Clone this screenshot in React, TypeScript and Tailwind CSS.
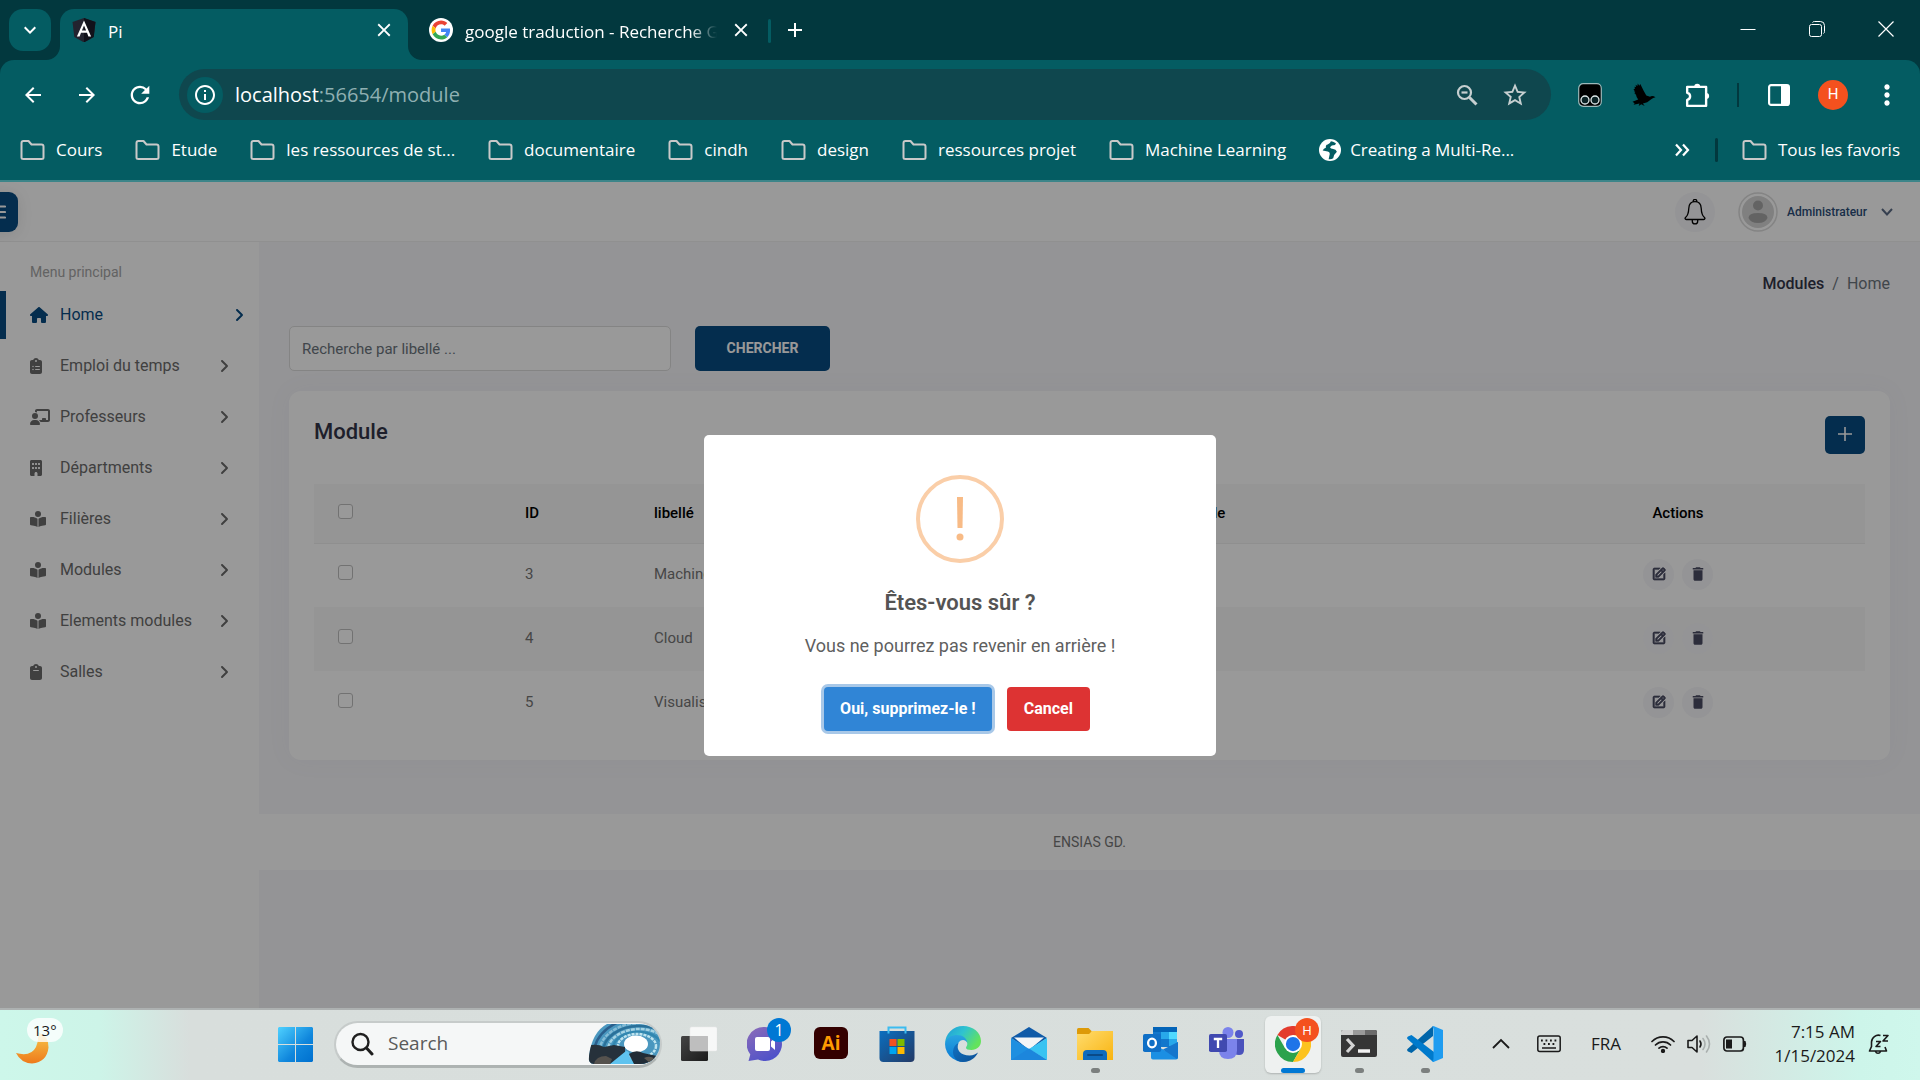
import type { ReactNode } from "react";
import {
  MdArrowBack,
  MdArrowForward,
  MdRefresh,
  MdClose,
  MdAdd,
  MdInfoOutline,
  MdStarOutline,
  MdMoreVert,
  MdKeyboardArrowDown,
  MdDelete,
} from "react-icons/md";
import {
  FaHouse,
  FaClipboardList,
  FaChalkboardUser,
  FaBuilding,
  FaBookOpenReader,
  FaClipboard,
  FaAngleRight,
} from "react-icons/fa6";
import { BiEdit } from "react-icons/bi";

const ui = "font-['Open_Sans','Noto_Sans',sans-serif]";

/* ---------- Browser chrome ---------- */

function AngularLogo() {
  return (
    <svg viewBox="0 0 24 24" className="size-6 shrink-0" aria-hidden="true">
      <path d="M12 0 23.5 4 21.7 19 12 24.4 2.3 19 .5 4Z" fill="#23232f" />
      <path d="M12 0 23.5 4 21.7 19 12 24.4Z" fill="#11111a" />
      <path d="M12 2.6 4.9 18.4h2.7L9 14.8h6l1.400 3.600h2.700ZM12 7.600l2.100 5H9.900Z" fill="#fff" />
    </svg>
  );
}

function GoogleLogo() {
  return (
    <svg viewBox="0 0 24 24" className="size-6 shrink-0" aria-hidden="true">
      <circle cx="12" cy="12" r="12" fill="#fff" />
      <g transform="translate(2.600 2.600) scale(.393)">
        <path fill="#EA4335" d="M24 9.500c3.540 0 6.710 1.220 9.210 3.600l6.850-6.850C35.900 2.380 30.470 0 24 0 14.620 0 6.510 5.380 2.560 13.220l7.980 6.190C12.430 13.720 17.740 9.500 24 9.500z" />
        <path fill="#4285F4" d="M46.980 24.550c0-1.570-.15-3.090-.38-4.550H24v9.020h12.940c-.58 2.960-2.260 5.480-4.780 7.180l7.730 6c4.510-4.180 7.090-10.360 7.090-17.650z" />
        <path fill="#FBBC05" d="M10.530 28.590c-.48-1.450-.76-2.990-.76-4.590s.27-3.140.76-4.590l-7.980-6.190C.92 16.460 0 20.120 0 24c0 3.880.92 7.540 2.560 10.780l7.970-6.190z" />
        <path fill="#34A853" d="M24 48c6.480 0 11.930-2.130 15.890-5.810l-7.730-6c-2.150 1.450-4.920 2.300-8.160 2.300-6.260 0-11.570-4.220-13.470-9.910l-7.980 6.190C6.510 42.620 14.620 48 24 48z" />
      </g>
    </svg>
  );
}

function TabStrip() {
  return (
    <div className="flex h-[60px] bg-[#02383e] pl-[9px] text-white">
      <button aria-label="Rechercher dans les onglets" className="mt-[9px] grid size-[42px] place-items-center rounded-[14px] bg-[#045c62]">
        <MdKeyboardArrowDown className="size-6" />
      </button>
      <div className="relative ml-[9px] mt-[9px] flex w-[348px] items-center rounded-t-[14px] bg-[#045c62] pb-[9px] pl-3 pr-[13px]">
        <svg viewBox="0 0 14 14" className="absolute bottom-0 right-full size-[14px]" aria-hidden="true">
          <path d="M14 0v14H0A14 14 0 0 0 14 0Z" fill="#045c62" />
        </svg>
        <svg viewBox="0 0 14 14" className="absolute bottom-0 left-full size-[14px]" aria-hidden="true">
          <path d="M0 0v14h14A14 14 0 0 1 0 0Z" fill="#045c62" />
        </svg>
        <AngularLogo />
        <span className="ml-3 flex-1 pt-[3px] text-[17px]">Pi</span>
        <button aria-label="Fermer l'onglet Pi">
          <MdClose className="size-[22px]" />
        </button>
      </div>
      <div className="ml-[21px] flex w-[324px] items-center">
        <GoogleLogo />
        <span className="ml-3 w-[252px] whitespace-nowrap pt-[3px] text-[17px] [mask-image:linear-gradient(to_right,black_225px,transparent_252px)]">
          google traduction - Recherche G
        </span>
        <button aria-label="Fermer l'onglet google traduction" className="ml-[13px]">
          <MdClose className="size-[22px]" />
        </button>
      </div>
      <div className="ml-[15px] mt-[19px] h-6 w-[3px] rounded bg-[#045c62]" />
      <button aria-label="Nouvel onglet" className="ml-[12px] self-center">
        <MdAdd className="size-6" />
      </button>
      <div className="ml-auto flex items-center pb-[2px]">
        <button aria-label="Réduire" className="grid w-[69px] place-items-center">
          <svg viewBox="0 0 18 18" className="size-[18px]" fill="none" stroke="currentColor">
            <path d="M1.500 9.500h15" />
          </svg>
        </button>
        <button aria-label="Restaurer" className="grid w-[69px] place-items-center">
          <svg viewBox="0 0 18 18" className="size-[18px]" fill="none" stroke="currentColor">
            <rect x="1.500" y="4.500" width="12" height="12" rx="2" />
            <path d="M4.500 2.500q.500-1 2-1h6q4 0 4 4v6q0 1.500-1 2" />
          </svg>
        </button>
        <button aria-label="Fermer" className="grid w-[69px] place-items-center">
          <svg viewBox="0 0 18 18" className="size-[18px]" fill="none" stroke="currentColor" strokeWidth="1.200">
            <path d="m1.500 1.500 15 15m0-15-15 15" />
          </svg>
        </button>
      </div>
    </div>
  );
}

function AddressBar() {
  return (
    <div className="flex h-[69px] items-center pl-[21px] text-white">
      <button aria-label="Précédent">
        <MdArrowBack className="size-6" />
      </button>
      <button aria-label="Suivant" className="ml-[30px]">
        <MdArrowForward className="size-6" />
      </button>
      <button aria-label="Actualiser" className="ml-[27px]">
        <MdRefresh className="size-7" />
      </button>
      <div className="ml-[25px] flex h-[51px] flex-1 items-center rounded-full bg-[#0f474e] pl-2 pr-[22px]">
        <button aria-label="Informations du site" className="grid size-9 place-items-center rounded-full bg-[#045c62]">
          <MdInfoOutline className="size-6" />
        </button>
        <p className="ml-3 flex-1 text-[20px] leading-6">
          localhost<span className="text-[#8fb0b2]">:56654/module</span>
        </p>
        <button aria-label="Zoom" className="mr-[22px] text-[#c6cfd0]">
          <svg viewBox="0 0 24 24" className="size-6" fill="none" stroke="currentColor" strokeWidth="2.200">
            <circle cx="9.500" cy="9.500" r="6.500" />
            <path d="m14.500 14.500 7 7" strokeWidth="3" />
            <path d="M6.500 9.500h6" />
          </svg>
        </button>
        <button aria-label="Ajouter aux favoris" className="text-[#c6cfd0]">
          <MdStarOutline className="size-7" />
        </button>
      </div>
      <div className="flex items-center pl-[27px]">
        <button aria-label="Extension de traduction">
          <svg viewBox="0 0 24 24" className="size-6">
            <rect x=".7" y=".7" width="22.600" height="22.600" rx="4.500" fill="#000" stroke="#9db9ba" strokeWidth="1.200" />
            <circle cx="7" cy="17" r="4" fill="#0b2225" stroke="#dfe9ea" strokeWidth="1.300" />
            <circle cx="17" cy="17" r="4" fill="#0b2225" stroke="#dfe9ea" strokeWidth="1.300" />
          </svg>
        </button>
        <button aria-label="Extension oiseau" className="ml-[30px]">
          <svg viewBox="0 0 24 24" className="size-6">
            <path
              d="M1.500 6.500 3 5.500 2.400 3.800l1.700.300L3.600 1.800l1.800 1.300L5.800.600l1.500 2.200L8.300 1l3.200 6.500 2.800 5 3.700 1.200q2.300-1.700 5.500.500l-2.300.700-2 1.300-4 3-4.300 1.400 1.800 2.300-3.400-1.600-2.600 1.700.800-2.400-5.900 1.200 1-1.500L.500 18.800l5.700-2.300Q4.200 14 4 11.800L2.200 10l1.300.300L1.800 8.300l1.500.500Z"
              fill="#000"
            />
          </svg>
        </button>
        <button aria-label="Extensions" className="ml-[29px]">
          <svg viewBox="0 0 24 24" className="size-[26px]" fill="none" stroke="currentColor" strokeWidth="2.200" strokeLinejoin="round">
            <path d="M2 4.500h17.500V22H2v-5.500a3.300 3.300 0 0 0 0-6.500Z" />
            <path d="M8.500 4.500a2.800 2.800 0 0 1 5.600 0ZM19.500 10.200a2.800 2.800 0 0 1 0 5.600Z" fill="currentColor" stroke="none" />
          </svg>
        </button>
        <div className="ml-[26px] h-6 w-[2px] bg-[#02383e]" />
        <button aria-label="Panneau latéral" className="ml-[28px]">
          <svg viewBox="0 0 24 24" className="size-6">
            <rect x="2.100" y="2.100" width="19.800" height="19.800" rx="2" fill="none" stroke="#fff" strokeWidth="2.200" />
            <path d="M14 2h8v20h-8Z" fill="#fff" />
          </svg>
        </button>
        <button aria-label="Profil" className="ml-[27px] grid size-[30px] place-items-center rounded-full bg-[#f4511e] font-['Roboto',sans-serif] text-[15px]">
          H
        </button>
        <button aria-label="Menu du navigateur" className="ml-[23px] mr-[17px]">
          <MdMoreVert className="size-[32px]" />
        </button>
      </div>
    </div>
  );
}

const bookmarks = ["Cours", "Etude", "les ressources de st...", "documentaire", "cindh", "design", "ressources projet", "Machine Learning"];

function Folder() {
  return (
    <svg viewBox="0 0 25 22" className="h-[22px] w-[25px] shrink-0" fill="none" stroke="#c9c9c9" strokeWidth="2" strokeLinejoin="round" aria-hidden="true">
      <path d="M1.500 18.500V4q0-2 2-2h5l3 3.500h10q2 0 2 2v11q0 1.500-2 1.500h-18q-2 0-2-1.500Z" />
    </svg>
  );
}

function BookmarksBar() {
  return (
    <nav aria-label="Favoris" className="flex h-[51px] items-center gap-[33px] whitespace-nowrap pb-[9px] pl-5 pr-5 text-[17px] text-white">
      {bookmarks.map((b) => (
        <a key={b} href="#" className="flex items-center gap-[11px]">
          <Folder />
          {b}
        </a>
      ))}
      <a href="#" className="flex items-center gap-[9px]">
        <svg viewBox="0 0 24 24" className="size-[22px]" aria-hidden="true">
          <circle cx="12" cy="12" r="12" fill="#fff" />
          <path d="M13 2.500q-1 3-3.500 3.500t-2 3.500Q5 10 4 12.500l5.500 1q3 1 2 4l-1 4.500q3 .500 5-1l1-3.500 3-3.500q-1-3-4-3t-3.500-2l2-2 3.500-.500 1-2Q15 2.500 13 2.500Z" fill="#045c62" />
        </svg>
        Creating a Multi-Re...
      </a>
      <button aria-label="Autres favoris" className="ml-auto">
        <svg viewBox="0 0 16 14" className="h-[14px] w-4" fill="none" stroke="currentColor" strokeWidth="2.200">
          <path d="m2 1.500 5 5.500-5 5.500m7-11 5 5.500-5 5.500" />
        </svg>
      </button>
      <div className="-ml-2 -mr-[9px] h-6 w-[3px] rounded bg-[#02383e]" />
      <a href="#" className="flex items-center gap-[11px]">
        <Folder />
        Tous les favoris
      </a>
    </nav>
  );
}

/* ---------- Application page ---------- */

type MenuItem = { label: string; icon: ReactNode; active?: boolean };

const menu: MenuItem[] = [
  { label: "Home", icon: <FaHouse className="size-[18px]" />, active: true },
  { label: "Emploi du temps", icon: <FaClipboardList className="-ml-0.5 size-4" /> },
  { label: "Professeurs", icon: <FaChalkboardUser className="h-4 w-5" /> },
  { label: "Départments", icon: <FaBuilding className="-ml-0.5 size-4" /> },
  { label: "Filières", icon: <FaBookOpenReader className="size-4" /> },
  { label: "Modules", icon: <FaBookOpenReader className="size-4" /> },
  { label: "Elements modules", icon: <FaBookOpenReader className="size-4" /> },
  { label: "Salles", icon: <FaClipboard className="-ml-0.5 size-4" /> },
];

function Sidebar() {
  return (
    <aside className="w-[259px] shrink-0 bg-white pt-[19px]">
      <h2 className="pl-[30px] text-[14px] leading-[22px] text-[#a5a5a5]">Menu principal</h2>
      <ul className="mt-2 flex flex-col gap-[3px]">
        {menu.map((m) => (
          <li key={m.label}>
            <a
              href="#"
              className={
                m.active
                  ? "flex h-12 items-center rounded-l-none border-l-[6px] border-[#084b82] pl-6 pr-3 text-[#084b82]"
                  : "flex h-12 items-center pl-[30px] pr-[27px] text-[#6b6b6b]"
              }
            >
              <span className="w-[30px]">{m.icon}</span>
              <span className="flex-1 text-[16px]">{m.label}</span>
              <FaAngleRight className="size-4" />
            </a>
          </li>
        ))}
      </ul>
    </aside>
  );
}

function PageHeader() {
  return (
    <header className="flex h-[60px] items-center border-b border-[#f0f0f0] bg-white pr-[27px] pt-px">
      <button aria-label="Basculer le menu" className="-ml-[22px] grid size-10 place-items-center rounded-[9px] bg-[#084b82] text-white shadow-[0_2px_16px_rgba(0,0,0,0.1)]">
        <svg viewBox="0 0 16 14" className="h-[14px] w-4" stroke="currentColor" strokeWidth="2.200" strokeLinecap="round">
          <path d="M1 1.500h14M1 7h14M1 12.500h14" />
        </svg>
      </button>
      <button aria-label="Notifications" className="ml-auto grid size-10 place-items-center rounded-full bg-[#f7f7fa] text-black">
        <svg viewBox="0 0 22 26" className="h-[26px] w-[22px]" fill="none" stroke="currentColor" strokeWidth="1.300" strokeLinejoin="round">
          <path d="M9.300 2.800a1.800 1.800 0 1 1 3.400 0M11 2.700c-4 0-6 2.600-6.200 6.500-.2 4.500-.8 7.300-3.300 9.300-1 1 0 2 1 2h17c1 0 2-1 1-2-2.500-2-3.100-4.800-3.300-9.300C17 5.300 15 2.700 11 2.700ZM8.300 20.800v1.400a2.700 2.700 0 0 0 5.400 0v-1.400" />
        </svg>
      </button>
      <button className="ml-[23px] flex items-center">
        <svg viewBox="0 0 40 40" className="size-10" aria-hidden="true">
          <circle cx="20" cy="20" r="19" fill="#fff" stroke="#dcdcdc" strokeWidth="1.500" />
          <circle cx="20" cy="20" r="16" fill="#d6d6d6" />
          <circle cx="20" cy="13.500" r="5" fill="#a6a6a6" />
          <path d="M10.500 26q0-5 9.500-5t9.500 5q-2 5-9.500 5t-9.500-5Z" fill="#a6a6a6" />
        </svg>
        <span className="ml-[9px] text-[12px] font-medium text-[#2b4d78]">Administrateur</span>
        <svg viewBox="0 0 12 8" className="ml-[14px] h-2 w-3 text-[#5b6b85]" fill="none" stroke="currentColor" strokeWidth="2">
          <path d="m1 1 5 5.500L11 1" />
        </svg>
      </button>
    </header>
  );
}

const rows = [
  { id: 3, label: "Machine Learning" },
  { id: 4, label: "Cloud" },
  { id: 5, label: "Visualisation" },
];

const box = "block size-[15px] appearance-none rounded-[3px] border border-[#bfbfbf] bg-white";

function ModuleCard() {
  return (
    <section className="mt-5 rounded-[12px] bg-white px-[25px] py-[25px] shadow-[0_0_24px_rgba(120,120,170,0.06)]">
      <div className="flex items-start justify-between">
        <h1 className="text-[22px] font-medium leading-8 text-[#333548]">Module</h1>
        <button aria-label="Ajouter un module" className="grid h-[38px] w-10 place-items-center rounded-[5px] bg-[#084b82] text-white">
          <svg viewBox="0 0 14 14" className="mb-[2px] size-[14px]" stroke="currentColor" strokeWidth="1.600">
            <path d="M7 0v14M0 7h14" />
          </svg>
        </button>
      </div>
      <table className="mt-[30px] w-full table-fixed text-left text-[15px] text-[#757575]">
        <thead>
          <tr className="h-[59px] border-b border-[#eeeeee] bg-[#f8f8f8] font-medium text-black">
            <th className="w-[187px] pb-1 pl-6">
              <input type="checkbox" aria-label="Tout sélectionner" className={box} />
            </th>
            <th className="w-[129px] pl-6 font-medium">ID</th>
            <th className="w-1/3 pl-6 font-medium">libellé</th>
            <th className="pl-7 font-medium">Module</th>
            <th className="w-[236px] font-medium">
              <div className="w-[98px] text-center">Actions</div>
            </th>
          </tr>
        </thead>
        <tbody>
          {rows.map((r) => (
            <tr key={r.id} className="h-16 even:bg-[#f8f8f8]">
              <td className="pb-[6px] pl-6">
                <input type="checkbox" aria-label={r.label} className={box} />
              </td>
              <td className="pb-[2px] pl-6">{r.id}</td>
              <td className="pb-[2px] pl-6">{r.label}</td>
              <td />
              <td className="pb-[2px]">
                <div className="flex w-[98px] justify-center gap-2 text-[#4a4c63]">
                  <button aria-label={"Modifier " + r.label} className="grid size-[31px] place-items-center rounded-full bg-[#f7f7fa]">
                    <BiEdit className="size-4" stroke="currentColor" strokeWidth={1} />
                  </button>
                  <button aria-label={"Supprimer " + r.label} className="grid size-[31px] place-items-center rounded-full bg-[#f7f7fa]">
                    <MdDelete className="size-[18px]" />
                  </button>
                </div>
              </td>
            </tr>
          ))}
        </tbody>
      </table>
    </section>
  );
}

function ConfirmDialog() {
  return (
    <div className="absolute inset-0 grid place-items-center bg-black/40">
      <div role="alertdialog" aria-labelledby="dlg-title" aria-describedby="dlg-text" className="flex w-[512px] flex-col items-center rounded-[5px] bg-white pb-[25px] pt-10">
        <svg viewBox="0 0 88 88" className="size-[88px]" aria-hidden="true">
          <circle cx="44" cy="44" r="42" fill="none" stroke="#facea8" strokeWidth="4" />
          <path d="M41 22h6l-.500 31h-5Z" fill="#f8bb86" />
          <circle cx="44" cy="62" r="3.500" fill="#f8bb86" />
        </svg>
        <h2 id="dlg-title" className="mt-[25px] text-[22px] font-semibold leading-[30px] text-[#545454]">
          Êtes-vous sûr ?
        </h2>
        <p id="dlg-text" className="mt-[15px] text-[18px] leading-[26px] text-[#5f5f5f]">
          Vous ne pourrez pas revenir en arrière !
        </p>
        <div className="mt-[28px] flex gap-[15px] pr-[6px] text-[16px] font-bold text-white">
          <button className="h-11 rounded-[4px] bg-[#3085d6] px-4 shadow-[0_0_0_3px_#a8c8e8]">Oui, supprimez-le !</button>
          <button className="h-11 rounded-[4px] bg-[#dd3333] px-[17px]">Cancel</button>
        </div>
      </div>
    </div>
  );
}

function ModulePage() {
  return (
    <main className="relative flex flex-1 flex-col overflow-hidden bg-[#f7f7fa] font-['Roboto',sans-serif]">
      <PageHeader />
      <div className="flex flex-1">
        <Sidebar />
        <div className="flex-1">
          <div className="px-[30px]">
            <nav aria-label="Fil d'Ariane" className="flex justify-end gap-2 pt-[30px] text-[16px] leading-6">
              <a href="#" className="font-medium text-[#333548]">
                Modules
              </a>
              <span className="text-[#6c757d]">/</span>
              <span className="text-[#6c757d]">Home</span>
            </nav>
            <form className="mt-[30px] flex gap-6">
              <input
                type="text"
                aria-label="Recherche par libellé"
                placeholder="Recherche par libellé ..."
                className="h-[45px] w-[382px] rounded-[5px] border border-[#dddddd] bg-white px-3 text-[15px] placeholder:text-[#6c757d]"
              />
              <button type="button" className="h-[45px] w-[135px] rounded-[5px] bg-[#084b82] text-[14px] font-bold text-white">
                CHERCHER
              </button>
            </form>
            <ModuleCard />
          </div>
          <footer className="mt-[54px] bg-white py-[17px] text-center text-[14px] leading-[22px] text-[#757575]">ENSIAS GD.</footer>
        </div>
      </div>
      <ConfirmDialog />
    </main>
  );
}

/* ---------- Taskbar ---------- */

const TaskViewIcon = () => (
  <svg viewBox="0 0 36 36" className="size-9">
    <defs>
      <linearGradient id="tv1" x1="0" y1="0" x2="1" y2="1">
        <stop stopColor="#444" />
        <stop offset="1" stopColor="#1b1b1b" />
      </linearGradient>
    </defs>
    <rect x="0" y="10" width="27" height="25" rx="1.500" fill="url(#tv1)" />
    <rect x="9" y="1" width="27" height="24" rx="1.500" fill="#fff" fillOpacity=".78" stroke="#e8e8e8" strokeWidth=".5" />
    <path d="M9 10h18v15H9z" fill="#b9b9b9" fillOpacity=".8" />
  </svg>
);

const ChatIcon = () => (
  <span className="relative">
    <svg viewBox="0 0 36 36" className="size-9">
      <defs>
        <linearGradient id="ch" x1="0" y1="0" x2="0.600" y2="1">
          <stop stopColor="#8d6cb8" />
          <stop offset="1" stopColor="#4f52c9" />
        </linearGradient>
      </defs>
      <path d="M18 1a17 17 0 1 1-7 32.500L1.500 35l1.800-6.500A17 17 0 0 1 18 1Z" fill="url(#ch)" />
      <rect x="8" y="11" width="15" height="14" rx="2" fill="#fff" />
      <path d="m24 15.500 4-3.500v12l-4-3.500Z" fill="#fff" />
    </svg>
    <span className="absolute -right-2 -top-2 grid size-6 place-items-center rounded-full bg-[#0078d4] text-[16px] leading-none text-white">1</span>
  </span>
);

const IllustratorIcon = () => (
  <span className="mb-0.5 grid h-8 w-[34px] place-items-center rounded-[6px] bg-[#330000] text-[19px] font-bold leading-none text-[#ff9a00]">Ai</span>
);

const StoreIcon = () => (
  <svg viewBox="0 0 36 36" className="size-9">
    <defs>
      <linearGradient id="st" x1="0" y1="0" x2="1" y2="1">
        <stop stopColor="#0a6fc0" />
        <stop offset="1" stopColor="#243a66" />
      </linearGradient>
    </defs>
    <path d="M.500 5h35v27q0 4-4 4h-27q-4 0-4-4Z" fill="url(#st)" />
    <path d="M9.500 7.500v-6h17v6" fill="none" stroke="#3cbcf0" strokeWidth="2" />
    <path d="M10.500 13h7v7h-7z" fill="#f25022" />
    <path d="M18.500 13h7v7h-7z" fill="#7fba00" />
    <path d="M10.500 21h7v7h-7z" fill="#00a4ef" />
    <path d="M18.500 21h7v7h-7z" fill="#ffb900" />
  </svg>
);

const EdgeIcon = () => (
  <svg viewBox="0 0 36 36" className="size-9">
    <defs>
      <linearGradient id="e1" x1="0" y1="0" x2="1" y2="1">
        <stop stopColor="#1173c4" />
        <stop offset="1" stopColor="#0c4f94" />
      </linearGradient>
      <linearGradient id="e2" x1="0" y1="0" x2="0" y2="1">
        <stop stopColor="#2aa5e0" />
        <stop offset="1" stopColor="#0878d4" />
      </linearGradient>
      <linearGradient id="e3" x1="0" y1="0" x2="1" y2=".5">
        <stop stopColor="#1f9ad8" />
        <stop offset=".5" stopColor="#2fc3d0" />
        <stop offset="1" stopColor="#63e35c" />
      </linearGradient>
    </defs>
    <path d="M0 18A18 18 0 0 1 18 0c10 0 18 6.500 18 15 0 5.500-4.300 9-9.500 9-3.500 0-5.500-1-5.500-2.300 0-1 1.300-1.500 1.300-3.700 0-3-3-7-9-7C6 11 1 14.500 0 18Z" fill="url(#e3)" />
    <path d="M0 18c.500-5 5.500-9 11.500-9 6.500 0 10.500 3.500 10.800 8-1-2.200-2.500-3-4.300-3-3 0-6 3-6 8.500 0 6.500 5 12.500 12 12.300A18 18 0 0 1 0 18Z" fill="url(#e2)" />
    <path d="M13.500 17c-3 7 2.500 12.500 11 12.500 4 0 6.500-1.500 8.500-3-2.500 5.500-8 9.500-15 9.500C10 36 7.500 28.500 8 25c.500-4 2.500-6.800 5.500-8Z" fill="url(#e1)" />
  </svg>
);

const MailIcon = () => (
  <svg viewBox="0 0 36 36" className="size-9">
    <path d="M0 12 18 1l18 11-18 12Z" fill="#0f5aa8" />
    <path d="M3 11.500h30L18 24Z" fill="#f3f5f7" />
    <path d="M0 12v22h36Z" fill="#1e8fe0" />
    <path d="M36 12v22L18 23Z" fill="#38c3f2" />
    <path d="M0 34h36L18 22.500Z" fill="#1c86dc" />
  </svg>
);

const ExplorerIcon = () => (
  <svg viewBox="0 0 36 36" className="size-9">
    <defs>
      <linearGradient id="fx" x1="0" y1="0" x2="1" y2="1">
        <stop stopColor="#ffdc6e" />
        <stop offset="1" stopColor="#f9b411" />
      </linearGradient>
    </defs>
    <path d="M0 3.500Q0 2 1.500 2h10L15 5.500V8H0Z" fill="#dd9a08" />
    <path d="M0 8h12l3-3h21v29H0Z" fill="url(#fx)" />
    <path d="M6 34v-6q0-4 4-4h16q4 0 4 4v6Z" fill="#0f6cbd" />
    <path d="M11 29h14" stroke="#0a4a87" strokeWidth="2" strokeLinecap="round" />
  </svg>
);

const OutlookIcon = () => (
  <svg viewBox="0 0 36 36" className="size-9">
    <path d="M10 3q0-2 2-2h20q2 0 2 2v18H10Z" fill="#1277cc" />
    <path d="M18 6h8v7h-8z" fill="#28a8ea" />
    <path d="M26 6h8v7h-8z" fill="#50d9ff" />
    <path d="M26 13h8v7h-8z" fill="#28a8ea" />
    <path d="M10 1h24v5H10z" fill="#0364b8" />
    <path d="M8 17l14 7.500L35 16v15.500q0 2-2 2H10q-2 0-2-2Z" fill="#1b8fe3" />
    <path d="M35 16v15q0 1-1 2L20 23.500Z" fill="#1676cc" />
    <rect x="0" y="8" width="18" height="18" rx="1.800" fill="#0f6fc6" />
    <ellipse cx="9" cy="17" rx="3.900" ry="4.400" fill="none" stroke="#fff" strokeWidth="2.300" />
  </svg>
);

const TeamsIcon = () => (
  <svg viewBox="0 0 36 36" className="size-9">
    <circle cx="30" cy="8" r="4" fill="#5059c9" />
    <path d="M23 13h12v11q0 5-5 5t-7-5Z" fill="#4b53bc" />
    <circle cx="19" cy="6.500" r="5.500" fill="#7b83eb" />
    <path d="M10 13h18v11.500q0 8.500-9 8.500t-9-8.500Z" fill="#7b83eb" />
    <rect x="0" y="8" width="18" height="18" rx="1.800" fill="#4049b0" />
    <path d="M4.800 13h8.400M9 13v9" stroke="#fff" strokeWidth="2.300" />
  </svg>
);

const ChromeIcon = () => (
  <span className="relative">
    <svg viewBox="0 0 48 48" className="size-9">
      <path d="M24 24 3.200 12A24 24 0 0 1 44.800 12H24Z" fill="#e33b2e" />
      <path d="M24 24 13.600 30 3.200 12A24 24 0 0 0 24 48l10.400-18Z" fill="#2ba24c" />
      <path d="M24 12h20.800A24 24 0 0 1 24 48l10.400-18Z" fill="#fcc31e" />
      <circle cx="24" cy="24" r="12" fill="#fff" />
      <circle cx="24" cy="24" r="9.500" fill="#1f74e8" />
    </svg>
    <span className="absolute -right-2 -top-2 grid size-6 place-items-center rounded-full bg-[#f4511e] text-[13px] leading-none text-white">H</span>
  </span>
);

const TerminalIcon = () => (
  <svg viewBox="0 0 36 36" className="size-9">
    <rect x="0" y="4" width="36" height="27" rx="2" fill="#363636" />
    <path d="M0 9V6q0-2 2-2h10v5Z" fill="#cfcfcf" />
    <path d="M12 4h12v5H12z" fill="#9a9a9a" />
    <path d="M24 4h10q2 0 2 2v3H24Z" fill="#6b6b6b" />
    <path d="m6 13 6 6.500-6 6.500" fill="none" stroke="#d5d5d5" strokeWidth="3.200" />
    <path d="M17 25h12" stroke="#f2f2f2" strokeWidth="3.500" />
  </svg>
);

const VsCodeIcon = () => (
  <svg viewBox="0 0 36 36" className="size-9">
    <path d="M26 0v10L4.500 27 1 25.500q-1.500-1-.5-2.500L25 1Z" fill="#0065a9" />
    <path d="M1 10.500 4.500 9 27 26v10l-2-1L.500 13q-1-1.500.500-2.500Z" fill="#007acc" />
    <path d="M26.500 0 36 4v28l-9.500 4q-1 0-1.500-1 1.500 0 1.500-2.500v-29Q26.500 1 25 1Z" fill="#1f9cf0" />
  </svg>
);

type TaskbarApp = { name: string; icon: ReactNode; state?: "open" | "active" };

const apps: TaskbarApp[] = [
  { name: "Vue des tâches", icon: <TaskViewIcon /> },
  { name: "Conversation", icon: <ChatIcon /> },
  { name: "Illustrator", icon: <IllustratorIcon /> },
  { name: "Microsoft Store", icon: <StoreIcon /> },
  { name: "Edge", icon: <EdgeIcon /> },
  { name: "Courrier", icon: <MailIcon /> },
  { name: "Explorateur de fichiers", icon: <ExplorerIcon />, state: "open" },
  { name: "Outlook", icon: <OutlookIcon /> },
  { name: "Teams", icon: <TeamsIcon /> },
  { name: "Chrome", icon: <ChromeIcon />, state: "active" },
  { name: "Terminal", icon: <TerminalIcon />, state: "open" },
  { name: "Visual Studio Code", icon: <VsCodeIcon />, state: "open" },
];

function SearchArt() {
  return (
    <svg viewBox="0 0 72 40" className="h-10 w-[72px]" aria-hidden="true">
      <defs>
        <clipPath id="artclip">
          <path d="M19 0h33a20 20 0 0 1 0 40H6q-6 0-5-8Q4 8 19 0Z" />
        </clipPath>
      </defs>
      <g clipPath="url(#artclip)">
        <path d="M0 0h72v40H0z" fill="#4a97bf" />
        <g fill="none" strokeWidth="2.500">
          <ellipse cx="52" cy="30" rx="46" ry="36" stroke="#2b5f8c" />
          <ellipse cx="52" cy="29" rx="41" ry="30" stroke="#86bcd6" strokeDasharray="4 1" />
          <ellipse cx="51" cy="28" rx="36" ry="26" stroke="#2a7099" />
          <ellipse cx="51" cy="26" rx="31" ry="21" stroke="#a5d3e3" strokeDasharray="4 1" />
          <ellipse cx="50" cy="24" rx="25" ry="16" stroke="#3187b0" />
          <ellipse cx="49" cy="22" rx="19" ry="12" stroke="#bfe4ef" strokeDasharray="3 1" />
        </g>
        <ellipse cx="48" cy="20" rx="12" ry="8.500" fill="#fff" />
        <path d="M0 40V22q8-3 16 1l10-2 11 2v8l-10 9Z" fill="#26313b" />
        <path d="M6 40q2-8 12-8l6 3-2 5Z" fill="#55524e" />
        <path d="m22 40 16-13q4 0 3 5l6 8Z" fill="#5fc3ef" />
        <path d="M41 30q7-5 14-1l14 3v8H46Z" fill="#222c36" />
        <path d="M56 34q6-3 11 1l-5 4Z" fill="#5c5650" />
      </g>
    </svg>
  );
}

function Taskbar() {
  return (
    <footer className="flex h-[72px] items-center border-t-2 border-[#adb1b1] bg-[linear-gradient(90deg,#cdf7ea_0px,#cdf4e8_100px,#d8dedc_190px,#d9dfdd_calc(100%-220px),#cdf5ea_calc(100%-60px),#cff7ec_100%)] pb-[2px] text-[#1a1a1a]">
      <button aria-label="Météo" className="relative ml-4 h-12 w-[60px] text-left">
        <svg viewBox="0 0 34 34" className="mt-2 size-[34px]">
          <defs>
            <linearGradient id="moon" x1="0" y1="0" x2="0" y2="1">
              <stop stopColor="#f7c94b" />
              <stop offset="1" stopColor="#ee7a1b" />
            </linearGradient>
          </defs>
          <path d="M22 1q11 4 10.500 15.500Q31 31 16 32.500 5 32 0 22q15 4 20-6 3-7 2-15Z" fill="url(#moon)" />
        </svg>
        <span className="absolute left-[11px] top-[-2px] rounded-xl bg-white/80 px-[6px] text-[15px] leading-6">13°</span>
      </button>
      <button aria-label="Démarrer" className="ml-[187px] grid w-[65px] place-items-center">
        <svg viewBox="0 0 35 35" className="size-[35px]">
          <defs>
            <linearGradient id="win" x1="0" y1="0" x2="35" y2="35" gradientUnits="userSpaceOnUse">
              <stop stopColor="#4fd1ff" />
              <stop offset=".6" stopColor="#0f86dc" />
              <stop offset="1" stopColor="#0070cf" />
            </linearGradient>
          </defs>
          <path d="M1 0h16v17H0V1ZM18 0h16l1 1v16H18ZM0 18h17v17H1l-1-1ZM18 18h17v16l-1 1H18Z" fill="url(#win)" />
        </svg>
      </button>
      <label className="ml-[6px] flex h-[47px] w-[328px] items-center rounded-full border-2 border-b-[3px] border-[#c6cbca] border-b-[#adb3b2] bg-[#f5f7f7] pl-[14px]">
        <svg viewBox="0 0 24 24" className="size-6" fill="none" stroke="#1f1f1f" strokeWidth="2.400" strokeLinecap="round" aria-hidden="true">
          <circle cx="10.500" cy="10" r="8" />
          <path d="m16.500 16 5.500 6" strokeWidth="3" />
        </svg>
        <input type="text" placeholder="Search" aria-label="Search" className="ml-[14px] w-0 flex-1 bg-transparent text-[19px] placeholder:text-[#5a5a5a]" />
        <SearchArt />
      </label>
      <div className="ml-1 flex h-full">
        {apps.map((a) => (
          <button key={a.name} aria-label={a.name} className="flex h-full w-[66px] items-center justify-center">
            <span
              className={
                a.state === "active"
                  ? "relative grid h-[57px] w-14 place-items-center rounded-[6px] bg-[#eef1f0] shadow-[0_1px_2px_rgba(0,0,0,0.2)]"
                  : "relative grid h-[57px] w-14 place-items-center"
              }
            >
              {a.icon}
              {a.state === "open" && <span className="absolute bottom-0 h-[5px] w-[9px] rounded-full bg-[#7c807f]" />}
              {a.state === "active" && <span className="absolute bottom-0 h-[5px] w-6 rounded-full bg-[#0078d4]" />}
            </span>
          </button>
        ))}
      </div>
      <div className="ml-auto flex items-center">
        <button aria-label="Afficher les icônes cachées">
          <svg viewBox="0 0 18 12" className="h-3 w-[18px]" fill="none" stroke="currentColor" strokeWidth="1.800">
            <path d="m1 10 8-8 8 8" />
          </svg>
        </button>
        <button aria-label="Clavier" className="ml-[27px]">
          <svg viewBox="0 0 24 18" className="h-[18px] w-6" fill="none" stroke="currentColor" strokeWidth="1.500">
            <rect x=".8" y="1" width="22.400" height="15.500" rx="2" />
            <path d="M4 5.500h17M6.500 9h12" strokeWidth="1.800" strokeDasharray="1.800 2.700" />
            <path d="M5 13h14" />
          </svg>
        </button>
        <button className="ml-[29px] w-8 text-[17px]">FRA</button>
        <button aria-label="Réseau, son et batterie" className="ml-[29px] flex items-center gap-3">
          <svg viewBox="0 0 24 18" className="h-[18px] w-6" fill="none" stroke="currentColor" strokeWidth="1.700" strokeLinecap="round">
            <path d="M1 6.500a15.500 15.500 0 0 1 22 0M4.500 10a10.500 10.500 0 0 1 15 0M8 13.200a5.800 5.800 0 0 1 8 0" />
            <circle cx="12" cy="16" r="1.300" fill="currentColor" />
          </svg>
          <svg viewBox="0 0 24 20" className="h-5 w-6" fill="none" stroke="currentColor" strokeWidth="1.600" strokeLinecap="round" strokeLinejoin="round">
            <path d="M1 6.500h4l5-4.500v16L5 13.500H1ZM13 7q2 3 0 6" />
            <path d="M16 4.500q4 5.500 0 11M19.500 2q6 8 0 16" stroke="#a9afae" />
          </svg>
          <svg viewBox="0 0 24 16" className="h-4 w-6">
            <rect x=".9" y="1" width="19.500" height="14" rx="3" fill="none" stroke="currentColor" strokeWidth="1.700" />
            <path d="M3 3.500h6v9H3zM21 5h1.500q1.500 3 0 6H21Z" fill="currentColor" />
          </svg>
        </button>
        <button className="ml-[18px] w-[90px] whitespace-nowrap text-right text-[17px] leading-6">
          7:15 AM
          <br />
          1/15/2024
        </button>
        <button aria-label="Notifications système" className="ml-[13px] mr-[30px]">
          <svg viewBox="0 0 22 22" className="size-[22px]" fill="none" stroke="currentColor" strokeWidth="1.600" strokeLinejoin="round">
            <path d="M12.500 2.500A7 7 0 0 0 3.500 9v4.500L1.500 18h17l-1.500-4M7.500 18.500a2.700 2.700 0 0 0 5 0M8 8.500h4.500L8 13.500h4.500M15 2.500h5L15 8h5" />
          </svg>
        </button>
      </div>
    </footer>
  );
}

export default function App() {
  return (
    <div className={`flex min-h-screen flex-col ${ui}`}>
      <div className="bg-[#02383e]">
        <TabStrip />
        <div className="rounded-t-[14px] border-b-2 border-[#3c8589] bg-[#045c62]">
          <AddressBar />
          <BookmarksBar />
        </div>
      </div>
      <ModulePage />
      <Taskbar />
    </div>
  );
}
